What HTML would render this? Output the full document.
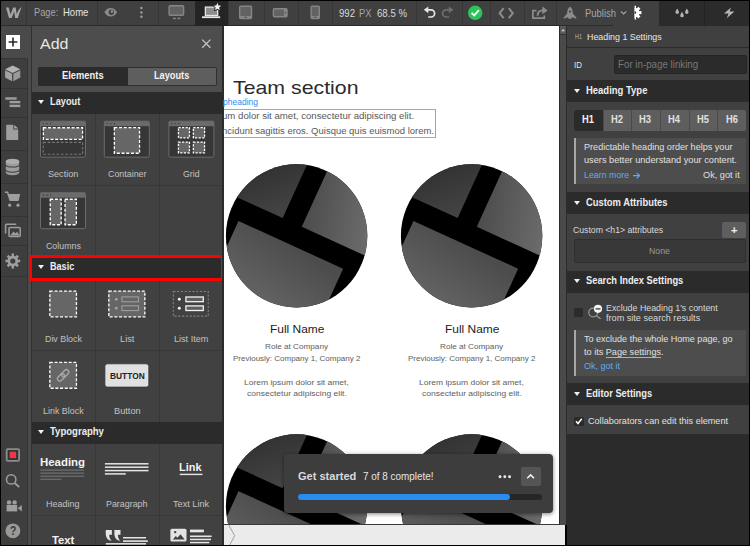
<!DOCTYPE html>
<html><head><meta charset="utf-8"><title>Webflow</title>
<style>
*{box-sizing:border-box;margin:0;padding:0}
html,body{width:750px;height:546px;overflow:hidden;background:#000;font-family:"Liberation Sans",sans-serif;}
#root{position:absolute;left:0;top:0;width:750px;height:546px;background:#000;overflow:hidden}
.a{position:absolute}
.t{position:absolute;line-height:16px;height:16px;white-space:nowrap}
svg{position:absolute;overflow:visible}
/* top bar */
#top{left:1px;top:1px;width:748px;height:25.4px;background:#404040;border-bottom:1.4px solid #2b2b2b}
.vd{position:absolute;top:1px;width:1px;height:24px;background:#363636}
/* left rail */
#rail{left:1px;top:26px;width:26px;height:519px;background:#3e3e3e}
.rd{position:absolute;left:1px;width:26px;height:1px;background:#343434}
/* add panel */
#addsh{left:26.5px;top:26px;width:5.5px;height:519px;background:#4a4a4a;border-left:1px solid #333;border-right:1px solid #303030}
#add{left:32px;top:26px;width:191px;height:519px;background:#414141}
.sec{position:absolute;height:22px;background:#2b2b2b}
.tri{position:absolute;width:0;height:0;border-left:3.5px solid transparent;border-right:3.5px solid transparent;border-top:4.2px solid #f0f0f0}
.hl{position:absolute;height:1px;background:#383838}
.vl{position:absolute;width:1px;background:#383838}
/* canvas */
#canvas{left:223.6px;top:26.4px;width:335.4px;height:498.6px;background:#fff;overflow:hidden}
/* right */
#right{left:567px;top:26px;width:182px;height:519px;background:#2b2b2b}
.row{position:absolute;left:567px;width:182px;background:#404040}

</style></head><body>
<div id="root">
<div id="top" class="a"></div>
<div class="vd" style="left:26px"></div>
<div class="vd" style="left:97px"></div>
<div class="vd" style="left:158px"></div>
<div class="vd" style="left:228px"></div>
<div class="vd" style="left:263.5px"></div>
<div class="vd" style="left:297.5px"></div>
<div class="vd" style="left:332.3px"></div>
<div class="vd" style="left:415.7px"></div>
<div class="vd" style="left:461.5px"></div>
<div class="vd" style="left:490px"></div>
<div class="vd" style="left:524px"></div>
<div class="vd" style="left:556.3px"></div>
<div class="a" style="left:194.5px;top:1px;width:33.3px;height:25px;background:#242424"></div>
<div class="a" style="left:567px;top:25px;width:46px;height:1px;background:#2b2b2b"></div>
<div class="a" style="left:613px;top:1px;width:46px;height:25px;background:#404040"></div>
<div class="a" style="left:659px;top:1px;width:90px;height:25px;background:#2b2b2b"></div>
<div class="a" style="left:704px;top:1px;width:1px;height:25px;background:#222"></div>
<span class="t" style="left:34.0px;top:4.4px;font-size:10.5px;color:#a6a6a6;transform:scaleX(0.8851);transform-origin:0 0;">Page:</span>
<span class="t" style="left:62.8px;top:4.4px;font-size:10.5px;color:#e6e6e6;transform:scaleX(0.9066);transform-origin:0 0;">Home</span>
<span class="t" style="left:339.0px;top:4.5px;font-size:10.5px;color:#d9d9d9;transform:scaleX(0.9127);transform-origin:0 0;">992</span>
<span class="t" style="left:359.3px;top:4.5px;font-size:10.5px;color:#a6a6a6;transform:scaleX(0.8847);transform-origin:0 0;">PX</span>
<span class="t" style="left:376.7px;top:4.5px;font-size:10.5px;color:#d9d9d9;transform:scaleX(0.9173);transform-origin:0 0;">68.5 %</span>
<span class="t" style="left:584.5px;top:4.6px;font-size:10.5px;color:#a6a6a6;transform:scaleX(0.8998);transform-origin:0 0;">Publish</span>
<div id="rail" class="a"></div>
<div class="rd" style="top:57.5px"></div>
<div class="rd" style="top:88px"></div>
<div class="rd" style="top:117px"></div>
<div class="rd" style="top:150.3px"></div>
<div class="rd" style="top:182.5px"></div>
<div class="rd" style="top:215.6px"></div>
<div class="rd" style="top:245.4px"></div>
<div class="rd" style="top:276px"></div>
<div id="addsh" class="a"></div>
<div id="add" class="a"></div>
<div class="a" style="left:32px;top:26px;width:191px;height:66px;background:#4d4d4d"></div>
<div class="a" style="left:1px;top:26px;width:30px;height:31.5px;background:#4a4a4a"></div>
<div class="a" style="left:6px;top:35px;width:14.4px;height:14px;background:#fff"></div>
<span class="t" style="left:40.0px;top:36.0px;font-size:15.5px;color:#e6e6e6;transform:scaleX(1.0328);transform-origin:0 0;">Add</span>
<div class="a" style="left:38px;top:67.2px;width:179px;height:18.4px;background:#5e5e5e;border:1px solid #2f2f2f;border-radius:2px"></div>
<div class="a" style="left:38px;top:67.2px;width:89.5px;height:18.4px;background:#2b2b2b;border-radius:2px 0 0 2px"></div>
<span class="t" style="left:61.7px;top:68.0px;font-size:10px;color:#f2f2f2;transform:scaleX(0.9355);transform-origin:0 0;font-weight:bold;">Elements</span>
<span class="t" style="left:154.0px;top:68.0px;font-size:10px;color:#f2f2f2;transform:scaleX(0.9206);transform-origin:0 0;font-weight:bold;">Layouts</span>
<div class="sec" style="left:32px;top:91.5px;width:191px"></div>
<div class="tri" style="left:37.6px;top:100.3px"></div>
<span class="t" style="left:49.8px;top:94.0px;font-size:10px;color:#ededed;transform:scaleX(0.9213);transform-origin:0 0;font-weight:bold;">Layout</span>
<div class="sec" style="left:32px;top:256.5px;width:191px"></div>
<div class="tri" style="left:37.6px;top:265.3px"></div>
<span class="t" style="left:49.8px;top:259.0px;font-size:10px;color:#ededed;transform:scaleX(0.9068);transform-origin:0 0;font-weight:bold;">Basic</span>
<div class="sec" style="left:32px;top:421.5px;width:191px"></div>
<div class="tri" style="left:37.6px;top:430.3px"></div>
<span class="t" style="left:49.8px;top:424.0px;font-size:10px;color:#ededed;transform:scaleX(0.9542);transform-origin:0 0;font-weight:bold;">Typography</span>
<div class="vl" style="left:95px;top:113.5px;height:143.0px"></div>
<div class="vl" style="left:158.5px;top:113.5px;height:143.0px"></div>
<div class="vl" style="left:95px;top:278.5px;height:143.0px"></div>
<div class="vl" style="left:158.5px;top:278.5px;height:143.0px"></div>
<div class="vl" style="left:95px;top:443.5px;height:101.5px"></div>
<div class="vl" style="left:158.5px;top:443.5px;height:101.5px"></div>
<div class="hl" style="left:32px;top:185px;width:191px"></div>
<div class="hl" style="left:32px;top:350px;width:191px"></div>
<div class="hl" style="left:32px;top:515px;width:191px"></div>
<span class="t" style="left:48.0px;top:165.5px;font-size:9.5px;color:#c2c2c2;transform:scaleX(0.9562);transform-origin:0 0;">Section</span>
<span class="t" style="left:107.7px;top:165.5px;font-size:9.5px;color:#c2c2c2;transform:scaleX(0.9344);transform-origin:0 0;">Container</span>
<span class="t" style="left:182.5px;top:165.5px;font-size:9.5px;color:#c2c2c2;transform:scaleX(0.9191);transform-origin:0 0;">Grid</span>
<span class="t" style="left:45.9px;top:237.7px;font-size:9.5px;color:#c2c2c2;transform:scaleX(0.928);transform-origin:0 0;">Columns</span>
<span class="t" style="left:44.6px;top:331.0px;font-size:9.5px;color:#c2c2c2;transform:scaleX(0.932);transform-origin:0 0;">Div Block</span>
<span class="t" style="left:119.7px;top:331.0px;font-size:9.5px;color:#c2c2c2;transform:scaleX(0.9732);transform-origin:0 0;">List</span>
<span class="t" style="left:173.7px;top:331.0px;font-size:9.5px;color:#c2c2c2;transform:scaleX(0.9553);transform-origin:0 0;">List Item</span>
<span class="t" style="left:42.7px;top:402.7px;font-size:9.5px;color:#c2c2c2;transform:scaleX(0.9374);transform-origin:0 0;">Link Block</span>
<span class="t" style="left:113.6px;top:402.7px;font-size:9.5px;color:#c2c2c2;transform:scaleX(0.972);transform-origin:0 0;">Button</span>
<span class="t" style="left:46.2px;top:495.7px;font-size:9.5px;color:#c2c2c2;transform:scaleX(0.9438);transform-origin:0 0;">Heading</span>
<span class="t" style="left:106.0px;top:495.7px;font-size:9.5px;color:#c2c2c2;transform:scaleX(0.9352);transform-origin:0 0;">Paragraph</span>
<span class="t" style="left:173.2px;top:495.7px;font-size:9.5px;color:#c2c2c2;transform:scaleX(0.9627);transform-origin:0 0;">Text Link</span>
<div class="a" style="left:29px;top:255px;width:195px;height:25.8px;border:3px solid #f00"></div>
<div id="canvas" class="a"></div>
<div class="a" style="left:222.4px;top:26px;width:1.2px;height:519px;background:#2b2b2b"></div>
<span class="t" style="left:233.4px;top:79.9px;font-size:19px;color:#2b2b2b;transform:scaleX(1.121);transform-origin:0 0;">Team section</span>
<span class="t" style="left:223.0px;top:94.0px;font-size:8.5px;color:#2e8def;transform:scaleX(1.0004);transform-origin:0 0;">pheading</span>
<div class="a" style="left:215px;top:109px;width:221px;height:29px;border:1px solid #6db3f5;clip-path:inset(0 0 0 9px)"></div>
<span class="t" style="left:221.9px;top:108.1px;font-size:8.5px;color:#585858;transform:scaleX(1.1326);transform-origin:0 0;clip-path:inset(0 0 0 1.5px);">um dolor sit amet, consectetur adipiscing elit.</span>
<span class="t" style="left:222.3px;top:123.0px;font-size:8.5px;color:#585858;transform:scaleX(1.1162);transform-origin:0 0;clip-path:inset(0 0 0 1.2px);">ncidunt sagittis eros. Quisque quis euismod lorem.</span>
<span class="t" style="left:269.6px;top:321.3px;font-size:10.5px;color:#222;transform:scaleX(1.1367);transform-origin:0 0;">Full Name</span>
<span class="t" style="left:265.3px;top:338.5px;font-size:8px;color:#5e5e5e;transform:scaleX(1.0192);transform-origin:0 0;">Role at Company</span>
<span class="t" style="left:233.1px;top:350.5px;font-size:8px;color:#5e5e5e;transform:scaleX(0.9982);transform-origin:0 0;">Previously: Company 1, Company 2</span>
<span class="t" style="left:244.4px;top:375.4px;font-size:8px;color:#5e5e5e;transform:scaleX(1.0618);transform-origin:0 0;">Lorem ipsum dolor sit amet,</span>
<span class="t" style="left:246.9px;top:385.8px;font-size:8px;color:#5e5e5e;transform:scaleX(1.0636);transform-origin:0 0;">consectetur adipiscing elit.</span>
<span class="t" style="left:444.6px;top:321.3px;font-size:10.5px;color:#222;transform:scaleX(1.1367);transform-origin:0 0;">Full Name</span>
<span class="t" style="left:440.3px;top:338.5px;font-size:8px;color:#5e5e5e;transform:scaleX(1.0192);transform-origin:0 0;">Role at Company</span>
<span class="t" style="left:408.1px;top:350.5px;font-size:8px;color:#5e5e5e;transform:scaleX(0.9982);transform-origin:0 0;">Previously: Company 1, Company 2</span>
<span class="t" style="left:419.4px;top:375.4px;font-size:8px;color:#5e5e5e;transform:scaleX(1.0618);transform-origin:0 0;">Lorem ipsum dolor sit amet,</span>
<span class="t" style="left:421.9px;top:385.8px;font-size:8px;color:#5e5e5e;transform:scaleX(1.0636);transform-origin:0 0;">consectetur adipiscing elit.</span>
<svg width="750" height="546" style="left:0;top:0;clip-path:inset(26px 191px 21px 224px)"><defs><linearGradient id="g1" gradientUnits="userSpaceOnUse" x1="-6" y1="-6" x2="50" y2="50"><stop offset="0" stop-color="#292929"/><stop offset="1" stop-color="#454545"/></linearGradient><linearGradient id="g2" gradientUnits="userSpaceOnUse" x1="95" y1="25" x2="165" y2="5"><stop offset="0" stop-color="#4c4c4c"/><stop offset="1" stop-color="#6e6e6e"/></linearGradient><linearGradient id="g3" gradientUnits="userSpaceOnUse" x1="100" y1="46.5" x2="90" y2="107"><stop offset="0" stop-color="#4c4c4c"/><stop offset="1" stop-color="#626262"/></linearGradient></defs><clipPath id="cc1"><ellipse cx="296.6" cy="235.85" rx="70.7" ry="71.65"/></clipPath><ellipse cx="296.6" cy="235.85" rx="70.7" ry="71.65" fill="#000"/><g clip-path="url(#cc1)"><g transform="translate(225.90000000000003,164.2) rotate(24.5)"><rect x="-80" y="-120" width="154" height="145.5" fill="url(#g1)"/><rect x="95" y="-120" width="160" height="145.5" fill="url(#g2)"/><rect x="35" y="46.5" width="115" height="200" fill="url(#g3)"/></g></g><clipPath id="cc2"><ellipse cx="471.6" cy="235.85" rx="70.7" ry="71.65"/></clipPath><ellipse cx="471.6" cy="235.85" rx="70.7" ry="71.65" fill="#000"/><g clip-path="url(#cc2)"><g transform="translate(400.90000000000003,164.2) rotate(24.5)"><rect x="-80" y="-120" width="154" height="145.5" fill="url(#g1)"/><rect x="95" y="-120" width="160" height="145.5" fill="url(#g2)"/><rect x="35" y="46.5" width="115" height="200" fill="url(#g3)"/></g></g><clipPath id="cc3"><ellipse cx="296.6" cy="505.95" rx="70.7" ry="71.65"/></clipPath><ellipse cx="296.6" cy="505.95" rx="70.7" ry="71.65" fill="#000"/><g clip-path="url(#cc3)"><g transform="translate(225.90000000000003,434.29999999999995) rotate(24.5)"><rect x="-80" y="-120" width="154" height="145.5" fill="url(#g1)"/><rect x="95" y="-120" width="160" height="145.5" fill="url(#g2)"/><rect x="35" y="46.5" width="115" height="200" fill="url(#g3)"/></g></g><clipPath id="cc4"><ellipse cx="471.6" cy="505.95" rx="70.7" ry="71.65"/></clipPath><ellipse cx="471.6" cy="505.95" rx="70.7" ry="71.65" fill="#000"/><g clip-path="url(#cc4)"><g transform="translate(400.90000000000003,434.29999999999995) rotate(24.5)"><rect x="-80" y="-120" width="154" height="145.5" fill="url(#g1)"/><rect x="95" y="-120" width="160" height="145.5" fill="url(#g2)"/><rect x="35" y="46.5" width="115" height="200" fill="url(#g3)"/></g></g></svg>
<div class="a" style="left:223.6px;top:524px;width:341.9px;height:21px;background:#ebebeb;border-top:1px solid #3a3a3a"></div>
<div class="a" style="left:559px;top:26px;width:8px;height:499px;background:#4a4a4a;border-left:1px solid #2b2b2b;border-right:1px solid #2b2b2b"></div>
<div class="a" style="left:284px;top:454.3px;width:269px;height:58.5px;background:#3d3d3d;border-radius:4px;box-shadow:0 1px 4px rgba(0,0,0,.5)"></div>
<span class="t" style="left:297.6px;top:468.4px;font-size:11px;color:#d9d9d9;transform:scaleX(1.0038);transform-origin:0 0;font-weight:bold;">Get started</span>
<span class="t" style="left:363.0px;top:468.2px;font-size:10.5px;color:#e6e6e6;transform:scaleX(0.9422);transform-origin:0 0;">7 of 8 complete!</span>
<div class="a" style="left:520.5px;top:467px;width:20px;height:19px;background:#555;border-radius:2px"></div>
<div class="a" style="left:297.5px;top:494px;width:244px;height:6px;background:#262626;border-radius:3px"></div>
<div class="a" style="left:297.5px;top:494px;width:212.5px;height:6px;background:#2b8cf0;border-radius:3px"></div>
<div id="right" class="a"></div>
<div class="row" style="top:26px;height:21px"></div>
<div class="row" style="top:48px;height:32px"></div>
<span class="t" style="left:574.7px;top:28.8px;font-size:6.5px;color:#b5b5b5;transform:scaleX(0.8301);transform-origin:0 0;">H1</span>
<span class="t" style="left:587.4px;top:29.0px;font-size:9px;color:#e6e6e6;transform:scaleX(0.9821);transform-origin:0 0;">Heading 1 Settings</span>
<span class="t" style="left:573.5px;top:56.6px;font-size:9.5px;color:#e6e6e6;transform:scaleX(0.8316);transform-origin:0 0;">ID</span>
<div class="a" style="left:613.5px;top:55px;width:133px;height:18.5px;background:#2b2b2b;border:1px solid #242424;border-radius:2px"></div>
<span class="t" style="left:617.8px;top:56.6px;font-size:10px;color:#787878;transform:scaleX(0.9749);transform-origin:0 0;">For in-page linking</span>
<div class="tri" style="left:573.8px;top:88.8px"></div>
<span class="t" style="left:586.0px;top:82.7px;font-size:10px;color:#ededed;transform:scaleX(0.9471);transform-origin:0 0;font-weight:bold;">Heading Type</span>
<div class="row" style="top:102px;height:90px"></div>
<div class="a" style="left:574px;top:109.5px;width:172px;height:21px;background:#5e5e5e;border-radius:2px"></div>
<div class="a" style="left:574px;top:109.5px;width:28.5px;height:21px;background:#2b2b2b;border-radius:2px 0 0 2px"></div>
<span class="t" style="left:581.9px;top:111.8px;font-size:10px;color:#f2f2f2;transform:scaleX(0.9377);transform-origin:0 0;font-weight:bold;">H1</span>
<span class="t" style="left:610.5px;top:111.8px;font-size:10px;color:#e0e0e0;transform:scaleX(0.9377);transform-origin:0 0;font-weight:bold;">H2</span>
<div class="a" style="left:602.7px;top:109.5px;width:1px;height:21px;background:#4a4a4a"></div>
<span class="t" style="left:639.4px;top:111.8px;font-size:10px;color:#e0e0e0;transform:scaleX(0.9377);transform-origin:0 0;font-weight:bold;">H3</span>
<div class="a" style="left:631.3px;top:109.5px;width:1px;height:21px;background:#4a4a4a"></div>
<span class="t" style="left:668.0px;top:111.8px;font-size:10px;color:#e0e0e0;transform:scaleX(0.9377);transform-origin:0 0;font-weight:bold;">H4</span>
<div class="a" style="left:660.0px;top:109.5px;width:1px;height:21px;background:#4a4a4a"></div>
<span class="t" style="left:697.1px;top:111.8px;font-size:10px;color:#e0e0e0;transform:scaleX(0.9377);transform-origin:0 0;font-weight:bold;">H5</span>
<div class="a" style="left:688.7px;top:109.5px;width:1px;height:21px;background:#4a4a4a"></div>
<span class="t" style="left:726.3px;top:111.8px;font-size:10px;color:#e0e0e0;transform:scaleX(0.9377);transform-origin:0 0;font-weight:bold;">H6</span>
<div class="a" style="left:717.4px;top:109.5px;width:1px;height:21px;background:#4a4a4a"></div>
<div class="a" style="left:574px;top:138px;width:172px;height:46px;background:#4d4d4d;border-left:2px solid #a6a6a6"></div>
<span class="t" style="left:584.3px;top:138.7px;font-size:9.5px;color:#e0e0e0;transform:scaleX(0.9564);transform-origin:0 0;">Predictable heading order helps your</span>
<span class="t" style="left:584.3px;top:152.0px;font-size:9.5px;color:#e0e0e0;transform:scaleX(0.9683);transform-origin:0 0;">users better understand your content.</span>
<span class="t" style="left:584.3px;top:167.0px;font-size:9.5px;color:#62aaf2;transform:scaleX(0.9302);transform-origin:0 0;">Learn more</span>
<span class="t" style="left:702.7px;top:167.0px;font-size:9.5px;color:#e0e0e0;transform:scaleX(0.9654);transform-origin:0 0;">Ok, got it</span>
<div class="tri" style="left:573.8px;top:200.8px"></div>
<span class="t" style="left:586.0px;top:194.7px;font-size:10px;color:#ededed;transform:scaleX(0.9383);transform-origin:0 0;font-weight:bold;">Custom Attributes</span>
<div class="row" style="top:214px;height:56.5px"></div>
<span class="t" style="left:573.4px;top:221.5px;font-size:9.5px;color:#d9d9d9;transform:scaleX(0.9134);transform-origin:0 0;">Custom &lt;h1&gt; attributes</span>
<div class="a" style="left:722px;top:222px;width:24px;height:16px;background:#5e5e5e;border-radius:2px"></div>
<span class="t" style="left:730.5px;top:222.0px;font-size:11px;color:#f2f2f2;transform:scaleX(1.0097);transform-origin:0 0;font-weight:bold;">+</span>
<div class="a" style="left:573.5px;top:238.8px;width:172.5px;height:23.8px;background:#383838;border:1px solid #2f2f2f;border-radius:2px"></div>
<span class="t" style="left:649.0px;top:242.7px;font-size:9.5px;color:#999;transform:scaleX(0.9243);transform-origin:0 0;">None</span>
<div class="tri" style="left:573.8px;top:279.3px"></div>
<span class="t" style="left:586.0px;top:273.2px;font-size:10px;color:#ededed;transform:scaleX(0.9312);transform-origin:0 0;font-weight:bold;">Search Index Settings</span>
<div class="row" style="top:293.2px;height:89.5px"></div>
<div class="a" style="left:573.6px;top:307.6px;width:9.2px;height:9.2px;background:#2b2b2b;border-radius:1.5px"></div>
<span class="t" style="left:606.3px;top:300.3px;font-size:9.5px;color:#d9d9d9;transform:scaleX(0.9299);transform-origin:0 0;">Exclude Heading 1&#x27;s content</span>
<span class="t" style="left:606.3px;top:310.4px;font-size:9.5px;color:#d9d9d9;transform:scaleX(0.9592);transform-origin:0 0;">from site search results</span>
<div class="a" style="left:574px;top:329.5px;width:172px;height:46.5px;background:#4d4d4d;border-left:2px solid #a6a6a6"></div>
<span class="t" style="left:584.3px;top:331.0px;font-size:9.5px;color:#e0e0e0;transform:scaleX(0.9499);transform-origin:0 0;">To exclude the whole Home page, go</span>
<span class="t" style="left:584.3px;top:343.5px;font-size:9.5px;color:#e0e0e0;transform:scaleX(0.9599);transform-origin:0 0;">to its Page settings.</span>
<div class="a" style="left:606.3px;top:356.5px;width:54.6px;height:1px;background:#b0b0b0"></div>
<span class="t" style="left:584.3px;top:358.4px;font-size:9.5px;color:#62aaf2;transform:scaleX(0.9443);transform-origin:0 0;">Ok, got it</span>
<div class="tri" style="left:573.8px;top:392.2px"></div>
<span class="t" style="left:586.0px;top:386.1px;font-size:10px;color:#ededed;transform:scaleX(0.9293);transform-origin:0 0;font-weight:bold;">Editor Settings</span>
<div class="row" style="top:404.7px;height:29.5px"></div>
<div class="a" style="left:574px;top:416.5px;width:9.5px;height:9.5px;background:#2b2b2b;border-radius:1.5px"></div>
<span class="t" style="left:588.0px;top:413.0px;font-size:9.5px;color:#e0e0e0;transform:scaleX(0.9571);transform-origin:0 0;">Collaborators can edit this element</span>
<svg width="750" height="546" style="left:0;top:0"><path d="M6 7.6 L8.6 7.6 L10.6 14.4 L13.2 7.6 L15.6 7.6 L16.8 14.4 C17.6 11.4 18.8 8.8 21.9 7.1 C20.4 10 19 14 17.9 18 L15.2 18 L14.2 11.6 L11.6 18 L9 18 Z" fill="#a6a6a6"/><path d="M104.4 12.3 C107.5 6.6 114 6.6 117.1 12.3 C114 18 107.5 18 104.4 12.3 Z" fill="#8c8c8c"/><circle cx="111.3" cy="12.3" r="2.7" fill="#404040"/><circle cx="111.9" cy="11.6" r="1.3" fill="#8c8c8c"/><circle cx="141.4" cy="8" r="1.25" fill="#999"/><circle cx="141.4" cy="12.4" r="1.25" fill="#999"/><circle cx="141.4" cy="16.8" r="1.25" fill="#999"/><rect x="169.1" y="5.7" width="14.5" height="9.6" rx="1" fill="#626262" stroke="#858585" stroke-width="1.4"/><rect x="172.9" y="17.7" width="3" height="1.5" fill="#858585"/><rect x="177.4" y="17.7" width="3" height="1.5" fill="#858585"/><rect x="205.4" y="7.1" width="12.3" height="8.4" fill="#8c8c8c" stroke="#e6e6e6" stroke-width="1.3"/><rect x="202" y="16.3" width="18.2" height="1.8" fill="#e6e6e6"/><polygon points="217.40,2.60 218.52,5.36 221.49,5.57 219.21,7.49 219.93,10.38 217.40,8.80 214.87,10.38 215.59,7.49 213.31,5.57 216.28,5.36" fill="#242424" stroke="#242424" stroke-width="1.6" stroke-linejoin="round"/><polygon points="217.40,2.80 218.46,5.44 221.30,5.63 219.11,7.46 219.81,10.22 217.40,8.70 214.99,10.22 215.69,7.46 213.50,5.63 216.34,5.44" fill="#f2f2f2"/><rect x="239.7" y="6.3" width="11.8" height="12.2" rx="1" fill="#626262" stroke="#858585" stroke-width="1.4"/><rect x="239.7" y="16" width="11.8" height="2.6" fill="#858585"/><rect x="244.5" y="16.8" width="2.2" height="1" fill="#444"/><rect x="273.4" y="8.7" width="13.6" height="8" rx="1" fill="#626262" stroke="#858585" stroke-width="1.4"/><rect x="284" y="8.7" width="3" height="8" fill="#858585"/><circle cx="285.4" cy="12.7" r="0.6" fill="#444"/><rect x="311.1" y="6.3" width="8.2" height="12.2" rx="1" fill="#626262" stroke="#858585" stroke-width="1.4"/><rect x="311.1" y="16" width="8.2" height="2.6" fill="#858585"/><rect x="314.2" y="16.8" width="2" height="1" fill="#444"/><path d="M427 9.8 L431 9.8 A3.6 3.6 0 0 1 431 17 L428.2 17" fill="none" stroke="#e6e6e6" stroke-width="1.7"/><path d="M423.8 9.8 L428.3 6.4 L428.3 13.2 Z" fill="#e6e6e6"/><path d="M450.2 9.8 L446.2 9.8 A3.6 3.6 0 0 0 446.2 17 L449 17" fill="none" stroke="#6e6e6e" stroke-width="1.7"/><path d="M453.4 9.8 L448.9 6.4 L448.9 13.2 Z" fill="#6e6e6e"/><circle cx="475.2" cy="12.8" r="7.2" fill="#2bc45b"/><path d="M471.6 12.9 L474.2 15.4 L478.9 10.2" fill="none" stroke="#fff" stroke-width="1.9"/><path d="M503.6 8.2 L499.6 13.2 L503.6 18.2 M508.8 8.2 L512.8 13.2 L508.8 18.2" fill="none" stroke="#8c8c8c" stroke-width="2"/><path d="M536.5 10.6 L532.9 10.6 L532.9 18.1 L544.3 18.1 L544.3 15.4" fill="none" stroke="#8c8c8c" stroke-width="1.7"/><path d="M537.6 15.8 C537.6 11.6 540.5 10.4 543 10.4" fill="none" stroke="#8c8c8c" stroke-width="1.9"/><path d="M542.4 6.6 L547.6 10.4 L542.4 14.2 Z" fill="#8c8c8c"/><path d="M570 6.4 C572.2 8.4 573 11 572.8 13.4 L576.3 17.6 L576.3 18.8 L572.2 17.2 L571.4 18.8 L568.6 18.8 L567.8 17.2 L563.7 18.8 L563.7 17.6 L567.2 13.4 C567 11 567.8 8.4 570 6.4 Z" fill="#8c8c8c"/><circle cx="570" cy="11.6" r="1.1" fill="#404040"/><path d="M620.9 11.4 L623.6 14 L626.3 11.4" fill="none" stroke="#a6a6a6" stroke-width="1.2"/><g clip-path="url(#gclip)"><polygon points="639.32,11.27 641.43,11.07 641.43,14.13 639.32,13.93 638.88,14.99 640.51,16.35 638.35,18.51 636.99,16.88 635.93,17.32 636.13,19.43 633.07,19.43 633.27,17.32 632.21,16.88 630.85,18.51 628.69,16.35 630.32,14.99 629.88,13.93 627.77,14.13 627.77,11.07 629.88,11.27 630.32,10.21 628.69,8.85 630.85,6.69 632.21,8.32 633.27,7.88 633.07,5.77 636.13,5.77 635.93,7.88 636.99,8.32 638.35,6.69 640.51,8.85 638.88,10.21" fill="#fff"/><circle cx="634.6" cy="12.6" r="4.9" fill="#fff"/><circle cx="634.6" cy="12.6" r="1.5" fill="#404040"/></g><clipPath id="gclip"><rect x="634.6" y="4" width="10" height="18"/></clipPath><path d="M677.2 8.44 C677.8900000000001 9.82 678.9250000000001 10.969999999999999 678.9250000000001 12.235 A1.7249999999999999 1.7249999999999999 0 0 1 675.475 12.235 C675.475 10.969999999999999 676.51 9.82 677.2 8.44 Z" fill="#b5b5b5"/><path d="M682 11.84 C682.69 13.219999999999999 683.725 14.37 683.725 15.635 A1.7249999999999999 1.7249999999999999 0 0 1 680.275 15.635 C680.275 14.37 681.31 13.219999999999999 682 11.84 Z" fill="#b5b5b5"/><path d="M686.8 8.44 C687.49 9.82 688.525 10.969999999999999 688.525 12.235 A1.7249999999999999 1.7249999999999999 0 0 1 685.0749999999999 12.235 C685.0749999999999 10.969999999999999 686.1099999999999 9.82 686.8 8.44 Z" fill="#b5b5b5"/><path d="M731 7.4 L724 13.6 L728.6 13.6 L726.8 18.2 L734.4 11.4 L729.6 11.4 Z" fill="#b5b5b5"/><path d="M13 37.6 V46.4 M8.6 42 H17.4" stroke="#2b2b2b" stroke-width="1.6" fill="none"/><path d="M12.7 65.6 L20.3 69.2 L12.7 72.9 L5.1 69.2 Z" fill="#b3b3b3"/><path d="M5.1 70.3 L12.1 73.8 L12.1 81.2 L5.1 77.6 Z" fill="#a3a3a3"/><path d="M20.3 70.3 L13.3 73.8 L13.3 81.2 L20.3 77.6 Z" fill="#999"/><rect x="5.4" y="97.3" width="11.3" height="2.4" fill="#9e9e9e"/><rect x="9.6" y="100.9" width="10.7" height="2.4" fill="#9e9e9e"/><rect x="9.6" y="104.7" width="10.7" height="2.4" fill="#9e9e9e"/><path d="M6.2 124.7 L13.4 124.7 L13.4 129.6 L18.2 129.6 L18.2 140.1 L6.2 140.1 Z" fill="#9e9e9e"/><path d="M14.4 124.9 L18.1 128.6 L14.4 128.6 Z" fill="#b0b0b0"/><path d="M5.8 161.4 A6.7 2.6 0 0 1 19.2 161.4 L19.2 172.6 A6.7 2.6 0 0 1 5.8 172.6 Z" fill="#9c9c9c"/><ellipse cx="12.5" cy="161.4" rx="6.7" ry="2.5" fill="#adadad"/><path d="M5.6 164.4 A6.9 2.6 0 0 0 19.4 164.4" fill="none" stroke="#3e3e3e" stroke-width="1.1"/><path d="M5.6 169.6 A6.9 2.6 0 0 0 19.4 169.6" fill="none" stroke="#3e3e3e" stroke-width="1.1"/><path d="M4.8 191.6 L8 191.6 L9 194 L20.2 194 L18.6 201 L9.6 201 L7 192.9 L4.8 192.9 Z" fill="#9e9e9e"/><circle cx="9.7" cy="205.2" r="1.6" fill="#9e9e9e"/><circle cx="18" cy="205.2" r="1.6" fill="#9e9e9e"/><path d="M5.6 233.5 L5.6 225.3 Q5.6 224.2 6.7 224.2 L16.3 224.2" fill="none" stroke="#9e9e9e" stroke-width="1.5"/><rect x="9" y="227.4" width="11.2" height="9.2" rx="1" fill="none" stroke="#9e9e9e" stroke-width="1.5"/><path d="M10.2 235.6 L13.6 231.4 L15.4 233.4 L17.2 231.8 L19.4 235.6 Z" fill="#9e9e9e"/><polygon points="17.87,259.84 20.18,259.65 20.18,262.35 17.87,262.16 17.21,263.76 18.97,265.26 17.06,267.17 15.56,265.41 13.96,266.07 14.15,268.38 11.45,268.38 11.64,266.07 10.04,265.41 8.54,267.17 6.63,265.26 8.39,263.76 7.73,262.16 5.42,262.35 5.42,259.65 7.73,259.84 8.39,258.24 6.63,256.74 8.54,254.83 10.04,256.59 11.64,255.93 11.45,253.62 14.15,253.62 13.96,255.93 15.56,256.59 17.06,254.83 18.97,256.74 17.21,258.24" fill="#9e9e9e"/><circle cx="12.8" cy="261" r="5.2" fill="#9e9e9e"/><circle cx="12.8" cy="261" r="2.6" fill="#3e3e3e"/><rect x="6.7" y="449.1" width="12.4" height="11.8" rx="1.2" fill="#333" stroke="#8c8c8c" stroke-width="1.8"/><rect x="9.7" y="451.7" width="6.4" height="6.4" fill="#f4364c"/><circle cx="11.2" cy="479.4" r="4.7" fill="none" stroke="#9e9e9e" stroke-width="1.5"/><path d="M14.6 483 L19.2 487" stroke="#9e9e9e" stroke-width="1.7"/><circle cx="9" cy="502.4" r="2.2" fill="#9e9e9e"/><circle cx="14.6" cy="502.4" r="2.2" fill="#9e9e9e"/><rect x="6.6" y="505" width="10.6" height="6.4" fill="#9e9e9e"/><path d="M17.8 508.2 L21.8 505 L21.8 511.4 Z" fill="#9e9e9e"/><circle cx="12.9" cy="530.8" r="7.4" fill="#999"/><path d="M202.2 39.6 L210.4 47.8 M210.4 39.6 L202.2 47.8" stroke="#c4c4c4" stroke-width="1.3"/><rect x="40.5" y="121.2" width="45" height="36" rx="1.5" fill="#363636" stroke="#6b6b6b"/><rect x="40.5" y="121.2" width="45" height="5" fill="#6b6b6b"/><circle cx="43.4" cy="123.60000000000001" r="0.85" fill="#474747"/><circle cx="47.0" cy="123.60000000000001" r="0.85" fill="#474747"/><circle cx="50.6" cy="123.60000000000001" r="0.85" fill="#474747"/><rect x="43.35" y="127.75" width="39.2" height="11.600000000000005" fill="#666" stroke="#fff" stroke-width="1.3" stroke-dasharray="3 1.7"/><rect x="43.25" y="142.35000000000002" width="39.4" height="11.9" fill="none" stroke="#777" stroke-width="1.1" stroke-dasharray="2.6 1.8"/><rect x="104.3" y="121.2" width="45" height="36" rx="1.5" fill="#363636" stroke="#6b6b6b"/><rect x="104.3" y="121.2" width="45" height="5" fill="#6b6b6b"/><circle cx="107.2" cy="123.60000000000001" r="0.85" fill="#474747"/><circle cx="110.8" cy="123.60000000000001" r="0.85" fill="#474747"/><circle cx="114.4" cy="123.60000000000001" r="0.85" fill="#474747"/><rect x="114.35000000000001" y="127.65" width="25.199999999999985" height="25.600000000000005" fill="#666" stroke="#fff" stroke-width="1.3" stroke-dasharray="3 1.7"/><rect x="168.9" y="121.2" width="45" height="36" rx="1.5" fill="#363636" stroke="#6b6b6b"/><rect x="168.9" y="121.2" width="45" height="5" fill="#6b6b6b"/><circle cx="171.8" cy="123.60000000000001" r="0.85" fill="#474747"/><circle cx="175.4" cy="123.60000000000001" r="0.85" fill="#474747"/><circle cx="179.0" cy="123.60000000000001" r="0.85" fill="#474747"/><rect x="178.45000000000002" y="127.65" width="10.999999999999982" height="10.299999999999994" fill="#666" stroke="#fff" stroke-width="1.3" stroke-dasharray="2.2 1.4"/><rect x="178.45000000000002" y="142.05" width="10.999999999999982" height="10.799999999999994" fill="#666" stroke="#fff" stroke-width="1.3" stroke-dasharray="2.2 1.4"/><rect x="193.35" y="127.65" width="11.2" height="10.299999999999994" fill="#666" stroke="#fff" stroke-width="1.3" stroke-dasharray="2.2 1.4"/><rect x="193.35" y="142.05" width="11.2" height="10.799999999999994" fill="#666" stroke="#fff" stroke-width="1.3" stroke-dasharray="2.2 1.4"/><rect x="40.5" y="192.7" width="45" height="36" rx="1.5" fill="#363636" stroke="#6b6b6b"/><rect x="40.5" y="192.7" width="45" height="5" fill="#6b6b6b"/><circle cx="43.4" cy="195.1" r="0.85" fill="#474747"/><circle cx="47.0" cy="195.1" r="0.85" fill="#474747"/><circle cx="50.6" cy="195.1" r="0.85" fill="#474747"/><rect x="50.25" y="199.25" width="10.899999999999995" height="25.50000000000001" fill="#666" stroke="#fff" stroke-width="1.3" stroke-dasharray="3 1.7"/><rect x="65.05000000000001" y="199.25" width="11.299999999999994" height="25.50000000000001" fill="#666" stroke="#fff" stroke-width="1.3" stroke-dasharray="3 1.7"/><rect x="49.85" y="291.04999999999995" width="26.59999999999999" height="25.800000000000022" fill="#666" stroke="#fff" stroke-width="1.3" stroke-dasharray="3 1.7"/><rect x="108.85000000000001" y="291.04999999999995" width="36.0" height="25.800000000000022" fill="#666" stroke="#fff" stroke-width="1.3" stroke-dasharray="3 1.7"/><circle cx="116.3" cy="299.3" r="1.35" fill="#a8a8a8"/><rect x="121.9" y="296.9" width="16.7" height="4.900000000000034" fill="none" stroke="#a3a3a3" stroke-width="1"/><circle cx="179.3" cy="299.3" r="1.45" fill="#f2f2f2"/><rect x="185.9" y="297.0" width="17.4" height="4.700000000000034" fill="#5e5e5e" stroke="#f2f2f2" stroke-width="1.3"/><circle cx="116.3" cy="308.2" r="1.35" fill="#a8a8a8"/><rect x="121.9" y="305.8" width="16.7" height="4.800000000000011" fill="none" stroke="#a3a3a3" stroke-width="1"/><circle cx="179.3" cy="308.2" r="1.45" fill="#f2f2f2"/><rect x="185.9" y="305.90000000000003" width="17.4" height="4.600000000000011" fill="#5e5e5e" stroke="#f2f2f2" stroke-width="1.3"/><rect x="173.35000000000002" y="291.45" width="34.9" height="24.70000000000001" fill="none" stroke="#808080" stroke-width="1.1" stroke-dasharray="2.2 1.6"/><rect x="49.85" y="362.45" width="26.59999999999999" height="25.799999999999965" fill="#666" stroke="#fff" stroke-width="1.3" stroke-dasharray="3 1.7"/><g transform="translate(63.1,375.4) rotate(-45)" fill="none" stroke="#a8a8a8" stroke-width="1.4"><rect x="-7" y="-2.4" width="8.2" height="4.8" rx="2.4"/><rect x="-1.2" y="-2.4" width="8.2" height="4.8" rx="2.4"/></g><rect x="104.9" y="363.8" width="43.9" height="23.3" rx="2.6" fill="#e0e0e0" stroke="#333" stroke-width="0.8"/><rect x="40.3" y="469.65000000000003" width="43.900000000000006" height="0.9" fill="#808080"/><rect x="40.3" y="472.65000000000003" width="43.900000000000006" height="0.9" fill="#808080"/><rect x="40.3" y="475.75" width="43.900000000000006" height="0.9" fill="#808080"/><rect x="40.3" y="478.75" width="21.1" height="0.9" fill="#808080"/><rect x="104.9" y="463.05" width="43.599999999999994" height="1.5" fill="#e6e6e6"/><rect x="104.9" y="466.45" width="43.599999999999994" height="1.5" fill="#e6e6e6"/><rect x="104.9" y="469.85" width="43.599999999999994" height="1.5" fill="#e6e6e6"/><rect x="104.9" y="473.15" width="20.799999999999997" height="1.5" fill="#e6e6e6"/><rect x="179.8" y="473.7" width="22.7" height="1.4" fill="#e6e6e6"/><path d="M105.76 530.1 H111.87 V534.8 H109.2 C109.2 537.3 110.07 539.5 111.65 540.7 C108.6 540.7 105.9 538.4 105.76 534.1 Z" fill="#e6e6e6"/><path d="M114.39 530.1 H120.5 V534.8 H117.83 C117.83 537.3 118.69999999999999 539.5 120.28 540.7 C117.22999999999999 540.7 114.53 538.4 114.39 534.1 Z" fill="#e6e6e6"/><rect x="123" y="537" width="23" height="1.5" fill="#e6e6e6"/><rect x="123" y="540.3" width="24.8" height="1.6" fill="#e6e6e6"/><rect x="105.8" y="543.1" width="40.2" height="1.5" fill="#e6e6e6"/><rect x="170.4" y="528.7" width="16.1" height="12.8" rx="1.6" fill="#e3e3e3"/><path d="M172.8 539.5 L175.8 536 L177.4 537.8 L180.5 534.2 L184.7 539.5 Z" fill="#414141"/><circle cx="175.2" cy="532.1" r="1.2" fill="#414141"/><rect x="190" y="529.6" width="13.9" height="2.7" fill="#e6e6e6"/><rect x="190" y="535.5" width="21.6" height="1.6" fill="#e6e6e6"/><rect x="190" y="538.7" width="21" height="1.5" fill="#e6e6e6"/><rect x="190" y="541.8" width="19.3" height="1.5" fill="#e6e6e6"/><path d="M228.6 524.8 L234.7 535.7 L229.6 545.2" fill="none" stroke="#a0a0a0" stroke-width="1"/><rect x="560" y="26" width="6" height="8" fill="#595959"/><rect x="560" y="34" width="6" height="1" fill="#333"/><path d="M561.2 31.2 L563.1 28.9 L565 31.2 Z" fill="#d0d0d0"/><circle cx="500" cy="476.7" r="1.45" fill="#ebebeb"/><circle cx="504.8" cy="476.7" r="1.45" fill="#ebebeb"/><circle cx="509.6" cy="476.7" r="1.45" fill="#ebebeb"/><path d="M527.2 478.3 L530.6 474.9 L534 478.3" fill="none" stroke="#f2f2f2" stroke-width="1.5"/><path d="M633 175.6 H639.4 M636.6 172.8 L639.6 175.6 L636.6 178.4" fill="none" stroke="#62aaf2" stroke-width="1.1"/><circle cx="593.2" cy="312.5" r="4.4" fill="none" stroke="#999" stroke-width="1.2"/><path d="M596.4 315.8 L600.6 318.8" stroke="#999" stroke-width="1.3"/><circle cx="598" cy="308.8" r="4.1" fill="#f2f2f2"/><rect x="595.6" y="308" width="4.8" height="1.7" fill="#666"/><path d="M576 421.3 L578 423.5 L581.8 418.8" fill="none" stroke="#fff" stroke-width="1.5"/></svg>
<span class="t" style="left:9.8px;top:523.0px;font-size:13px;color:#3a3a3a;letter-spacing:-0.203px;transform:scaleX(0.8);transform-origin:0 0;font-weight:bold;">?</span>
<span class="t" style="left:109.5px;top:368.0px;font-size:8.5px;color:#222;transform:scaleX(0.984);transform-origin:0 0;font-weight:bold;">BUTTON</span>
<span class="t" style="left:40.3px;top:454.0px;font-size:11px;color:#f2f2f2;transform:scaleX(1.039);transform-origin:0 0;font-weight:bold;">Heading</span>
<span class="t" style="left:179.2px;top:459.0px;font-size:11px;color:#f2f2f2;transform:scaleX(0.9945);transform-origin:0 0;font-weight:bold;">Link</span>
<span class="t" style="left:51.7px;top:532.3px;font-size:11px;color:#f2f2f2;transform:scaleX(1.0223);transform-origin:0 0;font-weight:bold;">Text</span>
<div class="a" style="left:0;top:545px;width:750px;height:1px;background:#000"></div>
</div>
</body></html>
